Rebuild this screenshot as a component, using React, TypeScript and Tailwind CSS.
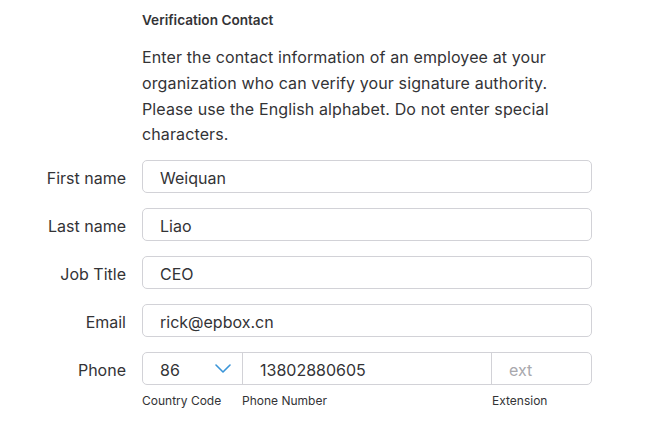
export default function App() {
  const fields = [
    { label: "First name", value: "Weiquan" },
    { label: "Last name", value: "Liao" },
    { label: "Job Title", value: "CEO" },
    { label: "Email", value: "rick@epbox.cn" },
  ];

  return (
    <div
      className="min-h-screen bg-white text-[#333336]"
      style={{ fontFamily: "Inter, 'Noto Sans', sans-serif" }}
    >
      <div className="grid grid-cols-[126px_450px] gap-x-4 pt-[12px]">
        <div />
        <div>
          <h2 className="text-[13.6px] font-semibold leading-4">Verification Contact</h2>
          <p className="mt-[17px] text-[16px] leading-[25.8px] tracking-[0.12px]">
            Enter the contact information of an employee at your organization who can verify
            your signature authority. Please use the English alphabet. Do not enter special
            characters.
          </p>
        </div>
      </div>

      <div className="mt-[12px] flex flex-col gap-[15px]">
        {fields.map((f) => (
          <div key={f.label} className="grid grid-cols-[126px_450px] items-center gap-x-4">
            <label className="pt-[3px] text-right text-[16px]">{f.label}</label>
            <div className="flex h-[33px] items-center rounded-[5px] border border-[#d2d2d7] pl-[17px] pt-[3px] text-[16px]">
              {f.value}
            </div>
          </div>
        ))}

        <div className="grid grid-cols-[126px_450px] gap-x-4">
          <label className="flex h-[33px] items-center justify-end pt-[3px] text-[16px]">Phone</label>
          <div>
            <div className="flex h-[33px] rounded-[5px] border border-[#d2d2d7] text-[16px]">
              <div className="flex w-[99px] items-center justify-between pl-[17px] pr-[11px]">
                <span className="pt-[3px]">86</span>
                <svg width="16" height="9" viewBox="0 0 16 9" fill="none">
                  <path d="M1 1l7 7 7-7" stroke="#3a95d8" strokeWidth="1.6" strokeLinecap="round" strokeLinejoin="round" />
                </svg>
              </div>
              <div className="flex w-[249px] items-center border-l border-[#d2d2d7] pl-[17px] pt-[3px]">
                13802880605
              </div>
              <div className="flex flex-1 items-center border-l border-[#d2d2d7] pl-[17px] pt-[3px] text-[#a8a8ad]">
                ext
              </div>
            </div>
            <div className="mt-[8px] flex text-[12px] leading-4">
              <span className="w-[100px]">Country Code</span>
              <span className="w-[250px]">Phone Number</span>
              <span>Extension</span>
            </div>
          </div>
        </div>
      </div>
    </div>
  );
}
